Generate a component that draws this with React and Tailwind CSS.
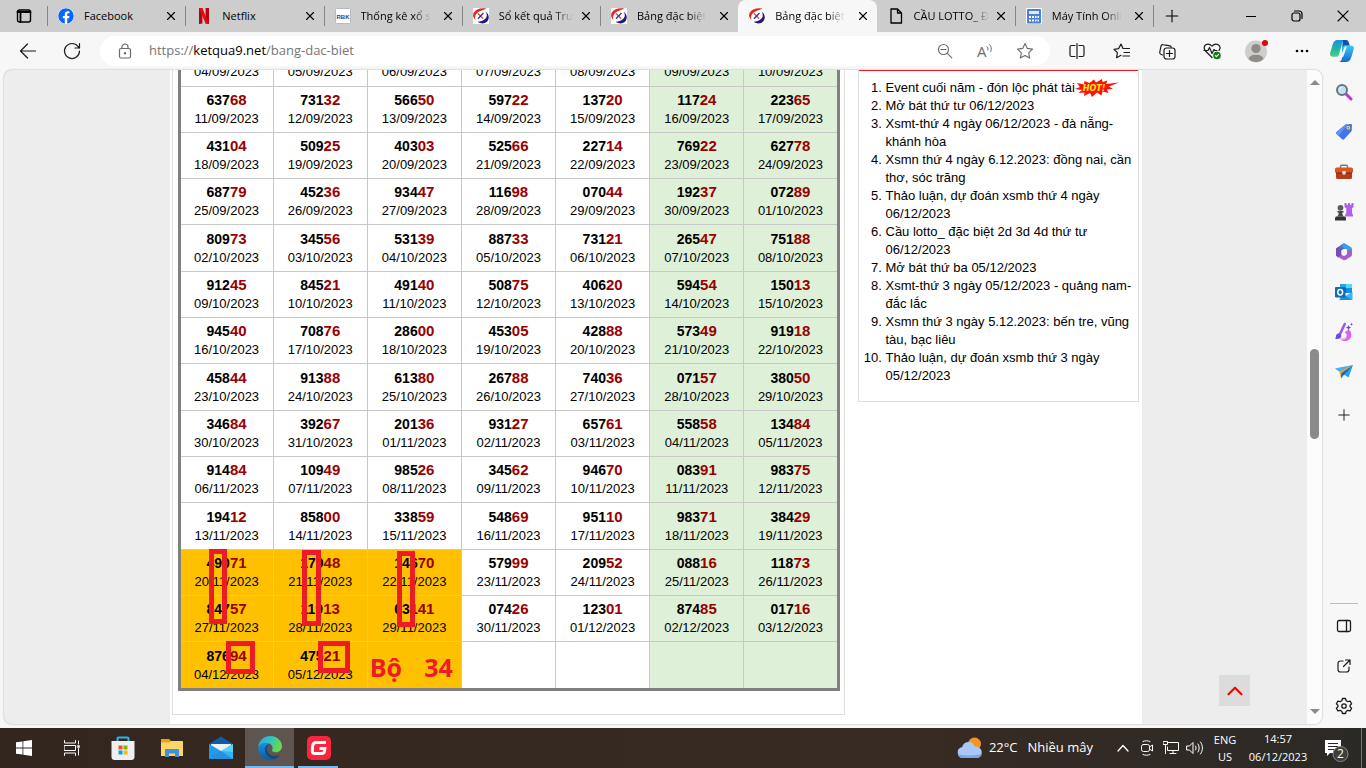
import { FaFacebook } from "react-icons/fa";
import { X, Plus, ChevronUp } from "lucide-react";

/* =========================
   Data
========================== */
const results = [
  ["04/09/2023", "05/09/2023", "06/09/2023", "07/09/2023", "08/09/2023", "09/09/2023", "10/09/2023"].map((d) => ["", d]),
  [["63768", "11/09/2023"], ["73132", "12/09/2023"], ["56650", "13/09/2023"], ["59722", "14/09/2023"], ["13720", "15/09/2023"], ["11724", "16/09/2023"], ["22365", "17/09/2023"]],
  [["43104", "18/09/2023"], ["50925", "19/09/2023"], ["40303", "20/09/2023"], ["52566", "21/09/2023"], ["22714", "22/09/2023"], ["76922", "23/09/2023"], ["62778", "24/09/2023"]],
  [["68779", "25/09/2023"], ["45236", "26/09/2023"], ["93447", "27/09/2023"], ["11698", "28/09/2023"], ["07044", "29/09/2023"], ["19237", "30/09/2023"], ["07289", "01/10/2023"]],
  [["80973", "02/10/2023"], ["34556", "03/10/2023"], ["53139", "04/10/2023"], ["88733", "05/10/2023"], ["73121", "06/10/2023"], ["26547", "07/10/2023"], ["75188", "08/10/2023"]],
  [["91245", "09/10/2023"], ["84521", "10/10/2023"], ["49140", "11/10/2023"], ["50875", "12/10/2023"], ["40620", "13/10/2023"], ["59454", "14/10/2023"], ["15013", "15/10/2023"]],
  [["94540", "16/10/2023"], ["70876", "17/10/2023"], ["28600", "18/10/2023"], ["45305", "19/10/2023"], ["42888", "20/10/2023"], ["57349", "21/10/2023"], ["91918", "22/10/2023"]],
  [["45844", "23/10/2023"], ["91388", "24/10/2023"], ["61380", "25/10/2023"], ["26788", "26/10/2023"], ["74036", "27/10/2023"], ["07157", "28/10/2023"], ["38050", "29/10/2023"]],
  [["34684", "30/10/2023"], ["39267", "31/10/2023"], ["20136", "01/11/2023"], ["93127", "02/11/2023"], ["65761", "03/11/2023"], ["55858", "04/11/2023"], ["13484", "05/11/2023"]],
  [["91484", "06/11/2023"], ["10949", "07/11/2023"], ["98526", "08/11/2023"], ["34562", "09/11/2023"], ["94670", "10/11/2023"], ["08391", "11/11/2023"], ["98375", "12/11/2023"]],
  [["19412", "13/11/2023"], ["85800", "14/11/2023"], ["33859", "15/11/2023"], ["54869", "16/11/2023"], ["95110", "17/11/2023"], ["98371", "18/11/2023"], ["38429", "19/11/2023"]],
  [["49071", "20/11/2023"], ["17948", "21/11/2023"], ["14670", "22/11/2023"], ["57999", "23/11/2023"], ["20952", "24/11/2023"], ["08816", "25/11/2023"], ["11873", "26/11/2023"]],
  [["84757", "27/11/2023"], ["11913", "28/11/2023"], ["03141", "29/11/2023"], ["07426", "30/11/2023"], ["12301", "01/12/2023"], ["87485", "02/12/2023"], ["01716", "03/12/2023"]],
  [["87694", "04/12/2023"], ["47521", "05/12/2023"], null, null, null, null, null],
];

const topics = [
  "Event cuối năm - đón lộc phát tài",
  "Mở bát thứ tư 06/12/2023",
  "Xsmt-thứ 4 ngày 06/12/2023 - đà nẵng-khánh hòa",
  "Xsmn thứ 4 ngày 6.12.2023: đồng nai, cần thơ, sóc trăng",
  "Thảo luận, dự đoán xsmb thứ 4 ngày 06/12/2023",
  "Cầu lotto_ đặc biệt 2d 3d 4d thứ tư 06/12/2023",
  "Mở bát thứ ba 05/12/2023",
  "Xsmt-thứ 3 ngày 05/12/2023 - quảng nam-đắc lắc",
  "Xsmn thứ 3 ngày 5.12.2023: bến tre, vũng tàu, bạc liêu",
  "Thảo luận, dự đoán xsmb thứ 3 ngày 05/12/2023",
];

/* =========================
   Icons
========================== */
function Line({ size = 18, sw = 1, className = "", children }) {
  return (
    <svg width={size} height={size} viewBox={`0 0 ${size} ${size}`} fill="none" stroke="currentColor" strokeWidth={sw} strokeLinecap="round" strokeLinejoin="round" className={`shrink-0 ${className}`}>
      {children}
    </svg>
  );
}

const Netflix = () => (
  <svg width="16" height="16" viewBox="0 0 16 16">
    <path d="M3 0h3.4v15.6L3 16z" fill="#b1060f" />
    <path d="M9.6 0H13v16l-3.4-.4z" fill="#b1060f" />
    <path d="M3 0h3.4L13 16l-3.4-.4z" fill="#e50914" />
  </svg>
);

const Rbk = () => (
  <svg width="16" height="16" viewBox="0 0 16 16">
    <rect x=".5" y=".5" width="15" height="15" rx="1" fill="#fff" stroke="#b4bac8" />
    <text x="8" y="10.5" fontSize="6" fontWeight="700" textAnchor="middle" fill="#2c3f84" fontFamily="Liberation Sans">RBK</text>
  </svg>
);

const Xoso = () => (
  <svg width="16" height="16" viewBox="0 0 16 16" fill="none">
    <path fill="#fff" d="M0 0h16v16H0z" />
    <path d="M13.500.8C9-.4 3.500.6 1 4.200-.5 7-.2 9.500 2.500 12 1.500 8.500 2.500 5.800 5.500 4 8 2.600 10.500 2 13.500.8z" fill="#dd2a22" />
    <path d="M12.500 3.500c2 2.800 1.600 5.800-.8 7.800-1.800 1.600-4 2.300-7 2.500 3 2.200 7 2.200 9.500-.3 2.500-3 2-7.500-1.700-10z" fill="#221a78" />
    <path d="M4.800 5.200 10.200 10.800" stroke="#e0564e" strokeWidth="1.400" />
    <path d="M10.500 5 5 10.800" stroke="#3a3590" strokeWidth="1.400" />
  </svg>
);

const PageIcon = () => (
  <Line size={16} sw={1.3}>
    <path d="M3 1h6.500L13.500 5v10H3zM9.500 1v4h4" />
  </Line>
);

const Calc = () => (
  <svg width="16" height="16" viewBox="0 0 16 16">
    <path fill="#fff" d="M0 0h16v16H0z" />
    <rect x="1" y="1" width="14" height="14.500" rx="1" fill="#4a7fd3" />
    <path fill="#dfeafb" d="M3 3h10v3H3z" />
    <path fill="#fff" d="M3 8h2v2H3zM6 8h2v2H6zM9 8h1.500v2H9zM11.500 8H13v2h-1.500zM3 11.500h2v2H3zM6 11.500h2v2H6zM9 11.500h1.500v2H9zM11.500 11.500H13v2h-1.500z" />
  </svg>
);

const Copilot = () => (
  <svg width="24" height="22" viewBox="0 0 24 22">
    <defs>
      <linearGradient id="cpA" x1="0" y1="0" x2="0" y2="1">
        <stop offset="0" stopColor="#1b8fe0" />
        <stop offset=".5" stopColor="#1fb5a5" />
        <stop offset="1" stopColor="#52cf7e" />
      </linearGradient>
      <linearGradient id="cpB" x1="0" y1="0" x2="0" y2="1">
        <stop offset="0" stopColor="#3ccbf0" />
        <stop offset="1" stopColor="#1566d6" />
      </linearGradient>
    </defs>
    <path d="M12 5.500h9c2.500 0 3.300 1.700 2.600 4l-2.400 8c-.9 3-2.700 4.500-5.500 4.500H8.500c2 0 2.800-1.200 3.400-3.200z" fill="url(#cpB)" />
    <path d="M7.500 0h8c-2 .3-2.800 1.500-3.400 3.500L9 14.500c-.5 1.500-1.500 2.200-3 2.200H2.500C.4 16.700-.4 15 .2 12.800L2.700 4.500C3.600 1.500 5 0 7.500 0z" fill="url(#cpA)" />
    <path d="M13 0h3c1.700 0 2.400 1.200 3 3l.7 2.500H15c-1.500 0-2.300.8-2.800 2.200z" fill="#0d54a8" />
    <path d="M14.800 6.500h2l-3.300 9.700c-.3.800-1 1-1.700 1h-1.600z" fill="#fff" opacity=".9" />
  </svg>
);

const SearchPic = () => (
  <svg width="18" height="18" viewBox="0 0 18 18" fill="none">
    <path d="m11 11 5 5" stroke="#b13be0" strokeWidth="3" strokeLinecap="round" />
    <circle cx="7" cy="7" r="5" fill="#bfe3f7" stroke="#6f7378" strokeWidth="2" />
    <path d="M4.500 6.500c.3-1.200 1-2 2.200-2.200" stroke="#fff" />
  </svg>
);
const TagPic = () => (
  <svg width="18" height="18" viewBox="0 0 18 18">
    <path d="M10.500 1.500 16 1c.7 0 1 .4 1 1l-.3 6-7.600 8.300c-.6.600-1.400.600-2 0L1.500 11c-.6-.6-.6-1.400 0-2z" fill="#4073ee" />
    <path d="M1.500 9 10.500 1.500 13 1.300 3.500 13l-2-2c-.6-.6-.6-1.400 0-2z" fill="#5d94fa" />
    <circle cx="13.300" cy="4.700" r="1.900" fill="#f9d64c" />
    <circle cx="13.300" cy="4.700" r=".7" fill="#8a6410" />
  </svg>
);
const ToolsPic = () => (
  <svg width="20" height="18" viewBox="0 0 20 18">
    <path d="M6.500 5V3.500c0-.8.500-1.300 1.300-1.300h4.400c.8 0 1.300.5 1.300 1.300V5" fill="none" stroke="#777" strokeWidth="1.400" />
    <rect x="1" y="4.500" width="18" height="5.500" rx="1.500" fill="#d95525" />
    <path d="M2 10h16v4.500c0 .8-.5 1.500-1.500 1.500h-13C2.500 16 2 15.300 2 14.500z" fill="#b53c16" />
    <path d="M2 9.500h16v1H2z" fill="#7c2307" />
    <circle cx="10" cy="9.800" r="2" fill="#d8dde2" />
  </svg>
);
const GamesPic = () => (
  <svg width="20" height="18" viewBox="0 0 20 18">
    <path d="M10.500 0h2v1.700h1.500V0h2v1.700h1.500V0H19.500v4L18 5.500V10l1 2v1.500h-8V12l1.300-2V5.500L10.500 4z" fill="#b45ef0" />
    <circle cx="6.500" cy="4.800" r="2.900" fill="#5b5b5b" />
    <path d="M3.500 8h6v1.500H8.300c0 2 .5 3 1.700 4H3c1.200-1 1.700-2 1.700-4H3.500z" fill="#484848" />
    <path d="M2 13.500h9c.8.7 1 1.500 1 2.500v1.500H1V16c0-1 .2-1.800 1-2.500z" fill="#333" />
  </svg>
);
const M365Pic = () => (
  <svg width="18" height="18" viewBox="0 0 18 18">
    <path d="M1 5.500 7.500 1c1-.6 2-.5 3 0L11 5.500 6.500 7.700v5.500L3 14.500l-1-1C1.200 13 1 12.500 1 11.500z" fill="#4f6bd0" />
    <path d="M8.500.6c1-.2 1.500 0 2.300.5l5 2.900c.8.500 1.200 1.200 1.200 2.200v5l-5-2V6.500L7 4z" fill="#3ba0e8" />
    <path d="M17 6.500v5c0 1-.4 1.700-1.200 2.200l-5 3c-1 .6-2 .6-3 0l-5-2.900L6.500 12l2.700 1L12 11.200V8z" fill="#a65fc7" />
    <path d="m2.800 13.800 3.700-2.300v-5L3 4.200 1.800 5c-.6.400-.8 1-.8 1.800v4.700c0 1 .5 1.700 1.800 2.300z" fill="#7a4db5" />
    <path d="M9 5.700 12 7.400v3.300l-2.900 1.700-2.800-1.700V7.400z" fill="#f7f7f7" />
  </svg>
);
const OutlookPic = () => (
  <svg width="18" height="18" viewBox="0 0 18 18">
    <path fill="#1490df" d="M5 1h12v9H5z" />
    <path fill="#28a8ea" d="M5 1h6v4H5z" />
    <path fill="#50d9ff" d="M11 1h6v4h-6z" />
    <path fill="#0364b8" d="M5 5h6v4H5z" />
    <path fill="#35b8f1" d="m4 16.500 13.500-7.500v7c0 .6-.4 1-1 1h-12z" />
    <path fill="#1784d8" d="m5 9 12 8H5z" opacity=".8" />
    <rect y="4" width="10.500" height="10.500" rx="1" fill="#0f6cbd" />
    <ellipse cx="5.200" cy="9.200" rx="2.400" ry="2.700" fill="none" stroke="#fff" strokeWidth="1.500" />
  </svg>
);
const DesignerPic = () => (
  <svg width="18" height="20" viewBox="0 0 18 20" fill="none">
    <path d="M13.500 7.500c3.500 2 3.800 7.500.7 10-3 2.500-7.500 2-9.500-1 3 .8 6.500 0 7-2.500.3-1.800-.7-3-2.200-3.500z" fill="#d964ea" />
    <path d="M5 16.500c2 1 5 .8 6.500-.8" stroke="#f3b4f4" strokeWidth="1.200" />
    <path d="M9.800 2 5 12" stroke="#9c58ea" strokeWidth="2.600" strokeLinecap="round" />
    <path d="M0 16.800c1-.5.7-1.800 1-3 .4-1.700 1.500-2.500 3-2.300 1.800.2 2.700 1.500 2.300 3-.5 2-3 3-6.300 2.300z" fill="#6a4ede" />
    <path d="m13.500 3 .8 1.800 1.900.8-1.900.8-.8 1.900-.8-1.900-1.900-.8 1.900-.8zM16.500.8l.5 1 1 .5-1 .5-.5 1-.5-1-1-.5 1-.5z" fill="#6f49de" />
  </svg>
);
const DropPic = () => (
  <svg width="18" height="18" viewBox="0 0 18 18">
    <path d="M0 5.500 18 2 6.500 10z" fill="#ffc14a" />
    <path d="m18 2-4.500 12.500L6.500 10z" fill="#2f9df0" />
    <path d="M18 2 6 10v5.500l3-3.800z" fill="#1667c0" />
    <path d="M0 5.500 18 2 4.500 8.800z" fill="#43b2f5" />
    <path d="m4.500 8.700 13-6.400L6.500 10l-.5 5.500z" fill="#f2a01f" />
  </svg>
);

const HotBadge = () => (
  <svg width="44" height="20" viewBox="0 0 44 20" className="absolute left-full top-1/2 -translate-y-1/2">
    <path d="m0 11 5-2-3-4 7 1.500L9.500 3l5 2L19 1.500l2 3L27 1l.5 3 5-1.500L31 6l13-1.500-10 4 4 2.500-6 .5 1.500 3.500-6-1.500-1 4-4.500-3-5 4.500-2-4-6 3 .5-3.500-6 .5L7 12z" fill="#fb1208" />
    <text x="19" y="13" fontSize="8" fontWeight="900" fontStyle="italic" textAnchor="middle" fill="#ffe818" fontFamily="DejaVu Sans">HOT!</text>
  </svg>
);

/* =========================
   Browser chrome
========================== */
const tabs = [
  { title: "Facebook", icon: <FaFacebook size={16} color="#0866ff" className="rounded-full bg-white" /> },
  { title: "Netflix", icon: <Netflix /> },
  { title: "Thống kê xổ s", icon: <Rbk />, fade: true },
  { title: "Sổ kết quả Tru", icon: <Xoso />, fade: true },
  { title: "Bảng đặc biệt", icon: <Xoso />, fade: true },
  { title: "Bảng đặc biệt", icon: <Xoso />, fade: true, active: true },
  { title: "CẦU LOTTO_ Đ", icon: <PageIcon />, fade: true },
  { title: "Máy Tính Onli", icon: <Calc />, fade: true },
];

function TabStrip() {
  return (
    <header className="flex h-8 shrink-0 items-center bg-[#cdcdcd] text-black">
      <button aria-label="Tab actions" className="flex h-8 w-[47px] items-center justify-center">
        <Line size={16} sw={1.4}>
          <rect x="1.500" y="2" width="13" height="12" rx="2" />
          <path d="M1.500 4h13M4.500 4v10" strokeWidth="1.800" />
        </Line>
      </button>
      <div className="flex h-8 max-w-[1106px] flex-1">
        {tabs.map((tab, i) => (
          <div
            key={i}
            className={`flex h-8 min-w-0 flex-1 items-center pl-[10px] pr-[6px] ${
              tab.active ? "rounded-t-lg border-l border-transparent bg-[#f7f7f7]" : i === 6 ? "border-l border-transparent" : "relative border-l border-transparent before:absolute before:-left-px before:top-[6px] before:h-5 before:w-px before:bg-[#868686]"
            }`}
          >
            <span className="shrink-0">{tab.icon}</span>
            <span className="ml-[10px] min-w-0 flex-1 whitespace-nowrap text-[11px]/[16px]">
              <span className={tab.fade ? "inline-block [mask-image:linear-gradient(to_right,black_75%,transparent)]" : ""}>{tab.title}</span>
            </span>
            <button aria-label="Close tab" className="flex size-4 shrink-0 items-center justify-center">
              <X size={14} strokeWidth={2} />
            </button>
          </div>
        ))}
      </div>
      <button aria-label="New tab" className="flex h-8 w-9 items-center justify-center border-l border-[#868686] [border-image:linear-gradient(transparent_6px,#868686_6px,#868686_26px,transparent_26px)_1]">
        <Plus size={20} strokeWidth={1.3} />
      </button>
      <div className="ml-auto flex text-black">
        <button aria-label="Minimize" className="flex h-8 w-[46px] items-center justify-center"><Line size={10}><path d="M0 5.500h10" /></Line></button>
        <button aria-label="Restore" className="flex h-8 w-[46px] items-center justify-center">
          <Line size={12} sw={1.2}>
            <rect x="1" y="3" width="8" height="8" rx="2" />
            <path d="M3.500 1H8c2 0 3 1 3 3v4.500" />
          </Line>
        </button>
        <button aria-label="Close window" className="flex h-8 w-[46px] items-center justify-center">
          <Line size={12} sw={1.1}><path d="m1 1 10 10M11 1 1 11" /></Line>
        </button>
      </div>
    </header>
  );
}

function Toolbar() {
  const btn = "flex h-[30px] w-[45px] items-center justify-center";
  return (
    <div className="flex h-[38px] shrink-0 items-center bg-[#f7f7f7] pl-[6px] text-[#1b1b1b]">
      <button aria-label="Back" className="flex h-[30px] w-11 items-center justify-center">
        <Line sw={1.2}><path d="M1.500 9h15M8.500 2 1.500 9l7 7" /></Line>
      </button>
      <button aria-label="Refresh" className="flex h-[30px] w-11 items-center justify-center">
        <Line sw={1.2}><path d="M16.500 9A7.500 7.500 0 1 1 15 4.500l1.500 1.500M16.500 1.500V6H12" /></Line>
      </button>
      <div className="ml-[6px] flex h-[30px] flex-1 items-center rounded-full bg-white pr-[5px] text-[#6b6b6b]">
        <span className="flex w-[49px] justify-center">
          <Line size={16} sw={1.2}>
            <rect x="2.500" y="5.500" width="11" height="9.500" rx="1.500" />
            <path d="M5 5.500V4a3 3 0 0 1 6 0v1.500" />
            <circle cx="8" cy="10.200" r=".6" fill="currentColor" />
          </Line>
        </span>
        <a href="#" className="flex-1 text-[13px] text-[#767676]">
          https://<span className="text-black">ketqua9.net</span>/bang-dac-biet
        </a>
        <button aria-label="Zoom out" className="flex w-10 justify-center">
          <Line size={16} sw={1.1}>
            <circle cx="6.500" cy="6.500" r="5" />
            <path d="m10.300 10.300 4.500 4.500M4 6.500h5" />
          </Line>
        </button>
        <button aria-label="Read aloud" className="flex w-10 justify-center">
          <Line size={18} sw={1}>
            <text x="1" y="15" fontSize="15" fill="currentColor" stroke="none" fontFamily="Open Sans">A</text>
            <path d="M11 4.500c1 .8 1.300 2 .8 3.500M13.500 2.500c2 1.800 2.400 4.200 1.300 7" />
          </Line>
        </button>
        <button aria-label="Favorite" className="flex w-10 justify-center">
          <Line size={18} sw={1.1}><path d="m9 1.500 2.300 4.900 5.200.7-3.800 3.700 1 5.300L9 13.500l-4.700 2.600 1-5.300L1.500 7.100l5.200-.7z" /></Line>
        </button>
      </div>
      <div className="ml-1 flex items-center">
        <button aria-label="Split screen" className={btn}>
          <Line size={18} sw={1.200}><path d="M7 3.500H3.500c-1 0-1.500.5-1.500 1.500v8c0 1 .5 1.500 1.500 1.500H7M11 3.500h3.500c1 0 1.500.5 1.500 1.500v8c0 1-.5 1.500-1.500 1.500H11M9 1.500v15" /></Line>
        </button>
        <button aria-label="Favorites" className={btn}>
          <Line size={18} sw={1.200}><path d="M10 6.500 8 2 5.700 6.600 1 7.300l3.400 3.400-.8 5L8 13.300M10 6.500h6.500M11 10.500h5.500M10 14h6.500" /></Line>
        </button>
        <button aria-label="Collections" className={btn}>
          <Line size={18} sw={1.200}>
            <rect x="6" y="6" width="11" height="11" rx="2.500" />
            <path d="M11.500 8.500v6M8.500 11.500h6M4.500 13 2.800 12.300c-1-.5-1.300-1.300-1-2.300L3 4c.3-1 1-1.600 2-1.400l7 1.200c.8.200 1.200.7 1.300 1.400" />
          </Line>
        </button>
        <button aria-label="Browser essentials" className={btn}>
          <Line size={18} sw={1.200}>
            <path d="M9 15.500 2.500 9C.5 6.800 1 4.200 2.500 3c2-1.500 4.500-1 6.500 1.200C11 2 13.500 1.500 15.500 3c1.500 1.200 2 3.500.5 5.500M1 8.500h4l1.500-3 2.500 6 2-4 1 1h2" />
            <circle cx="14" cy="13.500" r="3.800" fill="#107c10" stroke="none" />
            <path d="m12.400 13.700 1 1 2.200-2.400" stroke="#fff" />
          </Line>
        </button>
        <button aria-label="Profile" className={btn}>
          <svg width="26" height="24" viewBox="0 0 26 24">
            <circle cx="12" cy="12.500" r="11" fill="#d0cecb" />
            <circle cx="12" cy="9.500" r="4.600" fill="#8f8b87" />
            <path d="M4.500 20c1-3.500 4-4.300 7.500-4.300s6.500.8 7.500 4.300c-4 4-11 4-15 0z" fill="#8f8b87" />
            <circle cx="21" cy="4" r="3" fill="#e3000f" />
          </svg>
        </button>
        <button aria-label="Settings and more" className={btn}>
          <svg width="14" height="4" viewBox="0 0 14 4"><circle cx="2" cy="2" r="1.300" /><circle cx="7" cy="2" r="1.300" /><circle cx="12" cy="2" r="1.300" /></svg>
        </button>
        <button aria-label="Copilot" className="mr-[6px] flex w-9 justify-center"><Copilot /></button>
      </div>
    </div>
  );
}

function Sidebar() {
  const pics = [SearchPic, TagPic, ToolsPic, GamesPic, M365Pic, OutlookPic, DesignerPic, DropPic];
  const item = "flex h-10 w-full items-center justify-center";
  return (
    <aside className="flex w-11 shrink-0 flex-col items-center py-[2px] text-[#1b1b1b]">
      {pics.map((Pic, i) => (
        <button key={i} aria-label="Sidebar app" className={item}><Pic /></button>
      ))}
      <button aria-label="Customize" className="flex h-[46px] items-center"><Plus size={18} strokeWidth={1.3} /></button>
      <div className="mb-[2px] mt-auto h-px w-7 bg-[#bdbdbd]" />
      <button aria-label="Hide sidebar" className={item}>
        <Line size={16} sw={1.300}><rect x="1.500" y="2.500" width="13" height="11" rx="1.500" /><path d="M10.500 2.500v11" /></Line>
      </button>
      <button aria-label="Open link" className={item}>
        <Line size={16} sw={1.200}><path d="M7 3H4.500C3 3 2 4 2 5.500v6C2 13 3 14 4.500 14h6c1.500 0 2.500-1 2.500-2.500V9M9.500 2H14v4.500M14 2 7.500 8.500" /></Line>
      </button>
      <button aria-label="Settings" className={item}>
        <Line size={18} sw={1.300}>
          <circle cx="9" cy="9" r="2.200" />
          <path d="m7.500 1.500 3 0 .7 2.300 1.600.9 2.300-.6 1.500 2.600-1.600 1.700v1.200l1.600 1.700-1.500 2.600-2.300-.6-1.600.9-.7 2.300h-3l-.7-2.300-1.600-.9-2.300.6-1.500-2.600L3 9.600V8.400L1.400 6.700l1.500-2.600 2.300.6 1.600-.9z" />
        </Line>
      </button>
    </aside>
  );
}

/* =========================
   Page content
========================== */
function ResultCell({ cell, row, col }) {
  const bg = row >= 11 && col < 3 ? "bg-[#ffc000]" : col > 4 ? "bg-[#dff0d8]" : "bg-white";
  return (
    <td className={`border border-[#c8c8c8] bg-clip-padding p-0 text-center ${bg}`}>
      {cell && (
        <>
          <p className="h-[19px] text-sm/[18px] font-bold text-black">
            {cell[0].slice(0, 3)}
            <span className="text-[15px] text-[#990000]">{cell[0].slice(3)}</span>
          </p>
          <p className="text-[13px]/[18px] text-black">{cell[1]}</p>
        </>
      )}
      {row === 13 && col === 2 && (
        <p className="flex justify-between pl-[2px] pr-2 pt-1 font-['Open_Sans',sans-serif] text-[25px]/[32px] font-bold text-[#ed1c24]">
          <span>Bộ</span>
          <span>34</span>
        </p>
      )}
    </td>
  );
}

function ResultTable() {
  return (
    <div className="relative">
      <table className="h-[654px] w-full table-fixed border-collapse border-[3px] border-[#808080]">
        <tbody>
          {results.map((row, r) => (
            <tr key={r}>
              {row.map((cell, c) => (
                <ResultCell key={c} cell={cell} row={r} col={c} />
              ))}
            </tr>
          ))}
        </tbody>
      </table>
      {/* hand-drawn marks over the numbers */}
      <div className="absolute bottom-[67px] left-[31px] h-[75px] w-[18px] border-[5px] border-[#ed1c24]" />
      <div className="absolute bottom-[65px] left-[124px] h-[76px] w-[19px] border-[5px] border-[#ed1c24]" />
      <div className="absolute bottom-[64px] left-[219px] h-[76px] w-[18px] border-[5px] border-[#ed1c24]" />
      <div className="absolute bottom-[17px] left-[48px] h-[33px] w-[29px] border-[5px] border-[#ed1c24]" />
      <div className="absolute bottom-[18px] left-[140px] h-[32px] w-[32px] border-[5px] border-[#ed1c24]" />
    </div>
  );
}

function TopicList() {
  return (
    <section className="mr-[3px] flex-1 self-start border border-t-0 border-[#dddddd] bg-white">
      <div className="h-px bg-[#ed1c24]" />
      <ol className="list-decimal pb-4 pl-[27px] pr-1 pt-2 text-[13px]/[18px] text-black">
        {topics.map((topic, i) => (
          <li key={i}>
            <a href="#" className={i === 0 ? "relative" : ""}>
              {topic}
              {i === 0 && <HotBadge />}
            </a>
          </li>
        ))}
      </ol>
    </section>
  );
}

function Scrollbar() {
  return (
    <div className="flex w-[15px] shrink-0 flex-col items-center bg-[#fcfcfc]">
      <svg width="10" height="24" viewBox="0 0 10 24" fill="#8b8b8b"><path d="m0 15 5-5 5 5z" /></svg>
      <div className="mt-[255px] h-[90px] w-[9px] rounded-full bg-[#8b8b8b]" />
      <svg width="10" height="24" viewBox="0 0 10 24" fill="#8b8b8b" className="mt-auto"><path d="m0 9 5 5 5-5z" /></svg>
    </div>
  );
}

/* =========================
   Taskbar
========================== */
function Taskbar() {
  const app = "flex h-10 w-[49px] items-center justify-center";
  return (
    <footer className="flex h-10 shrink-0 items-center bg-linear-to-r from-[#33261e] via-[#382b23] via-65% to-[#2b2926] text-white">
      <button aria-label="Start" className="flex h-10 w-12 items-center justify-center">
        <svg width="16" height="16" viewBox="0 0 16 16" fill="#fff"><path d="m0 2.300 6.500-.9v6.200H0zM7.300 1.200 16 0v7.600H7.300zM0 8.400h6.500v6.200L0 13.700zM7.300 8.400H16V16l-8.700-1.200z" /></svg>
      </button>
      <button aria-label="Task view" className="flex h-10 w-12 items-center justify-center">
        <Line size={16}><path d="M.5 .5V3h11V.5M.5 15.500V13h11v2.500M.5 5.500h11v5H.5zM14.500 1v3M14.500 8.500v6.500" /><path d="M13.500 5.500h2v2h-2z" fill="#fff" strokeWidth=".5" /></Line>
      </button>
      <button aria-label="Microsoft Store" className={`ml-[2px] ${app}`}>
        <svg width="24" height="24" viewBox="0 0 24 24">
          <path d="M6.500 5V2.500c0-.6.400-1 1-1h9c.6 0 1 .4 1 1V5" fill="none" stroke="#2ab4f2" strokeWidth="2" />
          <path d="M.5 5h23v16c0 1.700-1.300 3-3 3h-17c-1.700 0-3-1.300-3-3z" fill="#efefef" />
          <path d="M7.500 9.500H11.500V13.500H7.500z" fill="#f25022" /><path d="M12.500 9.500h4v4h-4z" fill="#7fba00" /><path d="M7.500 14.500h4v4h-4z" fill="#00a4ef" /><path d="M12.500 14.500h4v4h-4z" fill="#ffb900" />
        </svg>
      </button>
      <button aria-label="File Explorer" className={app}>
        <svg width="24" height="20" viewBox="0 0 24 20">
          <path d="M1 1h8l2 2h11v5H1z" fill="#e6a50c" />
          <path d="M1 4.500h8.500l2-1.500H22c.6 0 1 .4 1 1v14H1z" fill="#fcd668" />
          <path d="M5 19v-7c0-.6.400-1 1-1h12c.6 0 1 .4 1 1v7h-4v-3.500H9V19z" fill="#3f91d8" />
        </svg>
      </button>
      <button aria-label="Mail" className={app}>
        <svg width="24" height="24" viewBox="0 0 24 24">
          <path d="M0 8 12 .5 24 8l-4 4H4z" fill="#0f5cab" />
          <path d="M2 8h20v7H2z" fill="#f1f1f1" />
          <path d="M0 8 12 15 0 23z" fill="#1f9ceb" /><path d="M24 8v15H0l12-8z" fill="#31b8f3" /><path d="M12 15 24 23H0z" fill="#2490e0" />
          <path d="m12 15 12-7v8z" fill="#5bd0fa" />
        </svg>
      </button>
      <button aria-label="Microsoft Edge" className={`${app} relative bg-[#5f5550] after:absolute after:inset-x-0 after:bottom-0 after:h-[2px] after:bg-[#76b9ed]`}>
        <svg width="24" height="24" viewBox="0 0 24 24">
          <defs>
            <linearGradient id="edgeA" x1="0" y1="0" x2="1" y2=".3"><stop offset="0" stopColor="#2aa8e0" /><stop offset=".55" stopColor="#35c3c4" /><stop offset="1" stopColor="#66d94a" /></linearGradient>
            <linearGradient id="edgeB" x1="0" y1="0" x2="0" y2="1"><stop offset="0" stopColor="#1b93de" /><stop offset="1" stopColor="#0c59a4" /></linearGradient>
          </defs>
          <path d="M.2 11C1 4.500 6 0 12.200 0 19 0 24 5 24 10c0 4-3 6.300-6.500 6.300-2.500 0-4-1-3.300-2.200.9-1.500.5-4.500-2-6C7.500 5.500 2.500 7.500.2 11z" fill="url(#edgeA)" />
          <path d="M.2 11C2.500 6.500 8.500 5.700 12 8c-3 0-5 2.700-5 6 0 4 3.500 8.500 9 9.200-1.200.5-2.600.8-4 .8C5 24-.6 18 .2 11z" fill="url(#edgeB)" />
          <path d="M12 8c-2.500.8-3.500 3-3.200 5.500.5 4 4.500 7 9.200 6.300 1.600-.2 3-.8 4-1.500-1.500 2.600-3.500 4.200-6 4.900-5.500-.7-9-5.200-9-9.200 0-3.300 2-6 5-6z" fill="#104a85" />
        </svg>
      </button>
      <button aria-label="Garena" className={`${app} relative after:absolute after:bottom-0 after:left-1 after:h-[2px] after:w-10 after:bg-[#76b9ed]`}>
        <svg width="24" height="24" viewBox="0 0 24 24" fill="none">
          <rect width="24" height="24" rx="5" fill="#fb2540" />
          <path d="M19 6.500H9.500C7 6.500 6 7.500 5.700 9.500L5.300 14C5 16.500 6 17.500 8 17.500h6.500c2 0 2.800-.8 3-2.500l.3-2.500h-5.300" stroke="#fff" strokeWidth="3" />
        </svg>
      </button>

      <div className="ml-auto flex items-center">
        <button className="flex items-center text-[13px]">
          <svg width="26" height="22" viewBox="0 0 26 22" className="mr-[6px]">
            <circle cx="17.500" cy="7" r="6.500" fill="#f9951c" />
            <path d="M6 21a5.500 5.500 0 0 1-.8-10.900A6.500 6.500 0 0 1 17.500 9a5.800 5.800 0 0 1 2.800 1A5.600 5.600 0 0 1 20 21z" fill="#a9c8f7" />
            <path d="M1 17c2 2 20 2 24-.5-.6 2.700-2.500 4.500-5 4.500H6c-2.500 0-4.500-1.500-5-4z" fill="#7ba4ea" />
          </svg>
          <span>22°C</span>
          <span className="ml-[10px]">Nhiều mây</span>
        </button>
        <button aria-label="Hidden icons" className="ml-[18px] flex w-6 justify-center"><Line size={12} sw={1.300}><path d="m1 9 5-5.500L11 9" /></Line></button>
        <button aria-label="Meet now" className="flex w-6 justify-center">
          <Line size={16}><rect x="2.500" y="4.500" width="8" height="7" rx="2" /><path d="m10.500 7 3-2v6l-3-2M4 1.500c2-1 5-1 7 0M4 14.500c2 1 5 1 7 0" /></Line>
        </button>
        <button aria-label="Network" className="flex w-6 justify-center">
          <Line size={16}><path d="M5.500 2.500h10v8h-11V7M7 13.500h6M10 10.500v3M.5 1.500h4v3h-4zM2.500 4.500v9" /></Line>
        </button>
        <button aria-label="Volume" className="flex w-6 justify-center">
          <Line size={18}><path d="M1 7h2.500L7 3.500v11L3.500 11H1zM9.500 7c.8 1.200.8 2.800 0 4M12 5c1.600 2.500 1.600 5.500 0 8M14.500 3c2.600 3.500 2.600 8.500 0 12" /></Line>
        </button>
        <button className="w-9 text-center text-[11px]/[17px]">
          ENG
          <br />
          US
        </button>
        <button className="w-[70px] text-center text-[11px]/[18px]">
          14:57
          <br />
          06/12/2023
        </button>
        <button aria-label="Notifications" className="flex h-10 w-[49px] items-center justify-center border-r border-[#77736f]">
          <svg width="26" height="28" viewBox="0 0 26 28">
            <path d="M1 6h16v13H6l-3 3v-3H1z" fill="#fff" />
            <path d="M4 9.500h10M4 12.500h10M4 15.500h6" stroke="#2b2926" />
            <circle cx="16.500" cy="20" r="7.500" fill="#403d3b" stroke="#8a8886" />
            <text x="16.500" y="24" fontSize="12" textAnchor="middle" fill="#fff" fontFamily="Open Sans">2</text>
          </svg>
        </button>
        <span className="w-1" />
      </div>
    </footer>
  );
}

function App() {
  return (
    <div className="flex h-screen flex-col overflow-hidden bg-[#f7f7f7] font-['Open_Sans',sans-serif]">
      <TabStrip />
      <Toolbar />
      <div className="flex min-h-0 flex-1">
        <div className="relative mb-1 ml-1 flex min-w-0 flex-1 overflow-hidden rounded-lg bg-[#ededed] font-['Liberation_Sans',sans-serif] shadow-[0_0_2px_rgba(0,0,0,0.35)]">
          <main className="min-w-0 flex-1">
            <div className="mx-auto flex h-full max-w-[972px] gap-[13px] bg-white">
              <section className="mb-[9px] ml-[2px] w-[673px] shrink-0 self-end border border-[#dddddd] bg-white pb-[23px] pl-[5px] pr-1">
                <ResultTable />
              </section>
              <TopicList />
            </div>
          </main>
          <button aria-label="Back to top" className="absolute bottom-[18px] right-[72px] flex size-[31px] items-center justify-center bg-[#dcdcdc] text-[#ff0000]">
            <ChevronUp size={26} strokeWidth={2} />
          </button>
          <Scrollbar />
        </div>
        <Sidebar />
      </div>
      <Taskbar />
    </div>
  );
}

export default App;
